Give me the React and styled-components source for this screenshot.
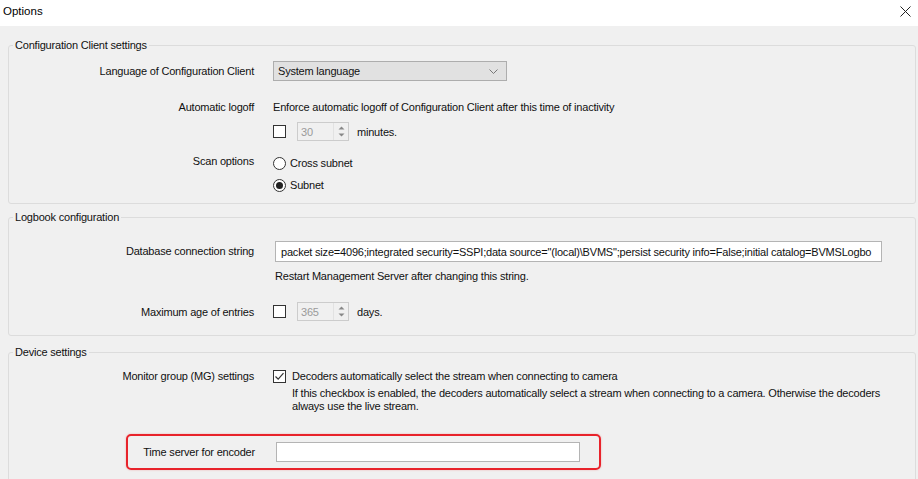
import React from 'react';
import styled, { createGlobalStyle } from 'styled-components';

const GlobalStyle = createGlobalStyle`
  html, body {
    margin: 0;
    padding: 0;
    background: #f0f0f0;
  }
  body {
    font-family: "Liberation Sans", Arial, sans-serif;
    font-size: 11px;
    letter-spacing: -0.2px;
    color: #111;
  }
`;

const Window = styled.div`
  width: 918px;
  height: 479px;
  overflow: hidden;
  background: #f0f0f0;
  display: flex;
  flex-direction: column;
`;

const TitleBar = styled.div`
  height: 26px;
  flex: none;
  background: #fff;
  display: flex;
  align-items: center;
  justify-content: space-between;
  padding: 0 0 4px 3px;
  box-sizing: border-box;
  font-size: 11.5px;
  letter-spacing: 0;
  color: #000;
`;

const CloseButton = styled.div`
  width: 26px;
  height: 22px;
  display: flex;
  align-items: center;
  justify-content: center;
`;

const Body = styled.div`
  display: flex;
  flex-direction: column;
  padding: 12px 2px 0 8px;
`;

const Group = styled.fieldset`
  margin: ${({ mt }) => mt || 0}px 0 0 0;
  padding: ${({ pad }) => pad || '8px 0 10px 0'};
  border: 1px solid #dcdcdc;
  border-radius: 3px;
  min-width: 0;
`;

const Legend = styled.legend`
  margin-left: 4px;
  padding: 0 2px;
  font-size: 11px;
  color: #111;
  line-height: 14px;
`;

const Row = styled.div`
  display: flex;
  align-items: ${({ top }) => (top ? 'flex-start' : 'center')};
  margin-top: ${({ mt }) => mt || 0}px;
`;

const Label = styled.div`
  width: ${({ w }) => w || 264}px;
  flex: none;
  text-align: right;
  padding-right: ${({ pr }) => pr ?? 19}px;
  box-sizing: border-box;
  line-height: ${({ lh }) => lh || 'normal'};
`;

const Stack = styled.div`
  display: flex;
  flex-direction: column;
  gap: ${({ gap }) => gap || 0}px;
`;

const Inline = styled.div`
  display: flex;
  align-items: center;
  gap: ${({ gap }) => gap || 8}px;
`;

const Unit = styled.span`
  margin-left: -3px;
`;

const Select = styled.div`
  width: 234px;
  height: 20px;
  box-sizing: border-box;
  border: 1px solid #adadad;
  background: #e1e1e1;
  display: flex;
  align-items: center;
  justify-content: space-between;
  padding: 0 8px 0 4px;
`;

const TextBox = styled.div`
  width: ${({ w }) => w}px;
  height: ${({ h }) => h || 21}px;
  box-sizing: border-box;
  border: 1px solid #b4b4b4;
  background: #fff;
  display: flex;
  align-items: center;
  padding-left: 5px;
  margin-left: ${({ ml }) => ml || 0}px;
  white-space: nowrap;
  overflow: hidden;
`;

const Spin = styled.div`
  width: 52px;
  height: 19px;
  box-sizing: border-box;
  border: 1px solid #cccccc;
  background: #f0f0f0;
  display: flex;
  align-items: center;
  justify-content: space-between;
  color: #9a9a9a;
  padding-left: 3px;
`;

const SpinArrows = styled.div`
  width: 14px;
  height: 17px;
  border-left: 1px solid #e2e2e2;
  display: flex;
  flex-direction: column;
  align-items: center;
  justify-content: center;
  gap: 3px;
`;

const Box = styled.div`
  width: 13px;
  height: 13px;
  box-sizing: border-box;
  border: 1px solid #333;
  background: #fff;
  flex: none;
  display: flex;
  align-items: center;
  justify-content: center;
`;

const RadioCircle = styled.div`
  width: 13px;
  height: 13px;
  box-sizing: border-box;
  border: 1px solid #333;
  border-radius: 50%;
  background: #fff;
  flex: none;
  display: flex;
  align-items: center;
  justify-content: center;

  &::after {
    content: '';
    display: ${({ checked }) => (checked ? 'block' : 'none')};
    width: 7px;
    height: 7px;
    border-radius: 50%;
    background: #222;
  }
`;

const Choice = styled.div`
  display: flex;
  align-items: center;
  gap: ${({ gap }) => gap || 4}px;
  height: 16px;
`;

const Note = styled.div`
  line-height: 13px;
  padding-left: ${({ pl }) => pl || 0}px;
  margin-top: ${({ mt }) => mt || 0}px;
`;

const Highlight = styled.div`
  margin-left: 117px;
  width: 475px;
  height: 36px;
  box-sizing: border-box;
  border: 2px solid #e8232b;
  border-radius: 5px;
  box-shadow: 0 0 2px rgba(232, 35, 43, 0.35);
  display: flex;
  align-items: center;
`;

const Arrow = ({ up }) => (
  <svg width="7" height="4" viewBox="0 0 7 4">
    <path d={up ? 'M0.5 3.5 L3.5 0.5 L6.5 3.5 Z' : 'M0.5 0.5 L3.5 3.5 L6.5 0.5 Z'} fill="#888" />
  </svg>
);

const SpinBox = ({ value }) => (
  <Spin>
    {value}
    <SpinArrows>
      <Arrow up />
      <Arrow />
    </SpinArrows>
  </Spin>
);

const Checkbox = ({ checked }) => (
  <Box>
    {checked && (
      <svg width="11" height="11" viewBox="0 0 11 11">
        <path d="M1.5 5.5 L4.2 8.2 L9.5 2.2" fill="none" stroke="#333" strokeWidth="1.2" />
      </svg>
    )}
  </Box>
);

export default function App() {
  return (
    <Window>
      <GlobalStyle />
      <TitleBar>
        Options
        <CloseButton>
          <svg width="11" height="11" viewBox="0 0 11 11">
            <path d="M0.5 0.5 L10.5 10.5 M10.5 0.5 L0.5 10.5" stroke="#222" strokeWidth="1" />
          </svg>
        </CloseButton>
      </TitleBar>

      <Body>
        <Group pad="9px 0 10px 0">
          <Legend>Configuration Client settings</Legend>
          <Row>
            <Label>Language of Configuration Client</Label>
            <Select>
              System language
              <svg width="9" height="5" viewBox="0 0 9 5">
                <path d="M0.5 0.5 L4.5 4.5 L8.5 0.5" fill="none" stroke="#777" strokeWidth="1" />
              </svg>
            </Select>
          </Row>
          <Row top mt={20}>
            <Label>Automatic logoff</Label>
            <Stack gap={8}>
              <Note>Enforce automatic logoff of Configuration Client after this time of inactivity</Note>
              <Inline gap={11}>
                <Checkbox />
                <SpinBox value="30" />
                <Unit>minutes.</Unit>
              </Inline>
            </Stack>
          </Row>
          <Row top mt={14}>
            <Label>Scan options</Label>
            <Stack gap={6}>
              <Choice>
                <RadioCircle />
                Cross subnet
              </Choice>
              <Choice>
                <RadioCircle checked />
                Subnet
              </Choice>
            </Stack>
          </Row>
        </Group>

        <Group mt={6} pad="17px 0 14px 0">
          <Legend>Logbook configuration</Legend>
          <Row top>
            <Label lh="21px">Database connection string</Label>
            <Stack gap={8}>
              <TextBox w={607} ml={2}>
                packet size=4096;integrated security=SSPI;data source="(local)\BVMS";persist security info=False;initial catalog=BVMSLogbo
              </TextBox>
              <Note pl={2}>Restart Management Server after changing this string.</Note>
            </Stack>
          </Row>
          <Row mt={19}>
            <Label>Maximum age of entries</Label>
            <Inline gap={11}>
              <Checkbox />
              <SpinBox value="365" />
              <Unit>days.</Unit>
            </Inline>
          </Row>
        </Group>

        <Group mt={9} pad="9px 0 20px 0">
          <Legend>Device settings</Legend>
          <Row top>
            <Label lh="16px">Monitor group (MG) settings</Label>
            <Stack>
              <Choice gap={6}>
                <Checkbox checked />
                Decoders automatically select the stream when connecting to camera
              </Choice>
              <Note pl={19} mt={3}>
                If this checkbox is enabled, the decoders automatically select a stream when connecting to a camera. Otherwise the decoders
                <br />
                always use the live stream.
              </Note>
            </Stack>
          </Row>
          <Row mt={21}>
            <Highlight>
              <Label w={127} pr={0}>Time server for encoder</Label>
              <TextBox w={304} h={20} ml={21} />
            </Highlight>
          </Row>
        </Group>
      </Body>
    </Window>
  );
}
